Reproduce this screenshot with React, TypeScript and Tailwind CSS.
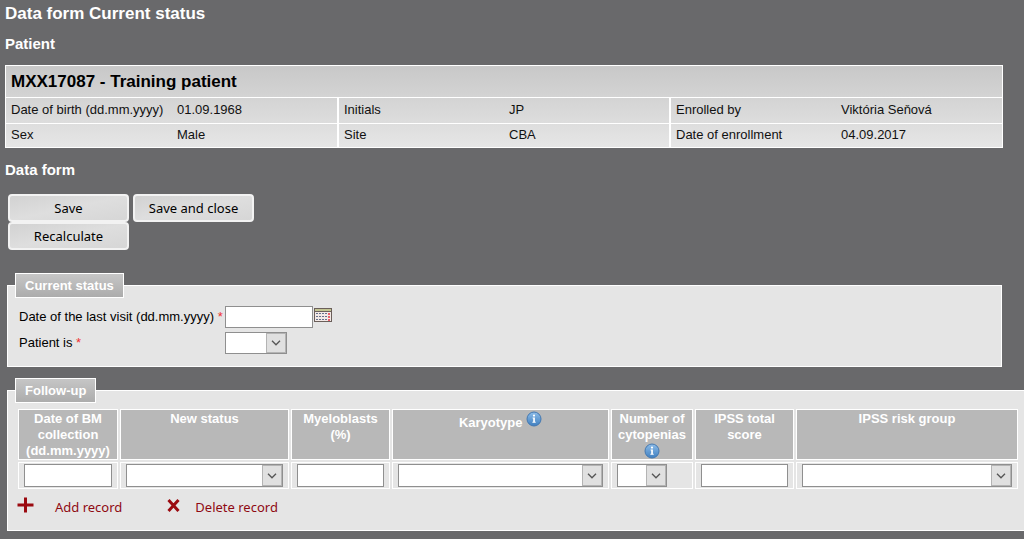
import type { ReactNode } from 'react';

type Field = { label: string; value: string };

const patientRows: Field[][] = [
  [
    { label: 'Date of birth (dd.mm.yyyy)', value: '01.09.1968' },
    { label: 'Initials', value: 'JP' },
    { label: 'Enrolled by', value: 'Viktória Seňová' },
  ],
  [
    { label: 'Sex', value: 'Male' },
    { label: 'Site', value: 'CBA' },
    { label: 'Date of enrollment', value: '04.09.2017' },
  ],
];

function SelectBox({ id, label, className }: { id?: string; label?: string; className: string }) {
  return (
    <div className={`relative ${className}`}>
      <select
        id={id}
        aria-label={label}
        className="block h-full w-full appearance-none rounded-none border border-[#8f8f8f] bg-white px-1 outline-none"
      >
        <option value=""></option>
      </select>
      <span className="pointer-events-none absolute inset-y-px right-px flex w-5 items-center justify-center border border-[#b4b4b4] bg-[#e0e0e0]">
        <svg width="10" height="6" viewBox="0 0 10 6" fill="none" stroke="#555" strokeWidth="1.3">
          <path d="M1 0.8 L5 4.8 L9 0.8" />
        </svg>
      </span>
    </div>
  );
}

function CalendarIcon() {
  return (
    <svg width="18" height="14" viewBox="0 0 18 14" shapeRendering="crispEdges">
      <rect x="0" y="0" width="18" height="14" fill="#6b5f5a" />
      <rect x="1" y="1" width="16" height="2" fill="#c3c592" />
      <rect x="1" y="4" width="16" height="9" fill="#f3e9e6" />
      {[5, 8, 11].map((y) =>
        [2, 5, 8, 11].map((x) => <rect key={`${x}-${y}`} x={x} y={y} width="2" height="1" fill="#66718c" />),
      )}
      {[5, 8, 11].map((y) => (
        <rect key={y} x="14" y={y} width="2" height="2" fill="#e8606a" />
      ))}
    </svg>
  );
}

function InfoIcon({ className }: { className: string }) {
  return (
    <svg width="16" height="16" viewBox="0 0 16 16" className={`inline-block ${className}`} role="img" aria-label="Information">
      <defs>
        <linearGradient id="info" x1="0" y1="0" x2="0" y2="1">
          <stop offset="0" stopColor="#8dbce8" />
          <stop offset="1" stopColor="#3f7fc0" />
        </linearGradient>
      </defs>
      <circle cx="8" cy="8" r="7" fill="url(#info)" stroke="#4478b0" strokeWidth="1" />
      <circle cx="8" cy="4.6" r="1.1" fill="#fff" />
      <path d="M6.6 6.6 H8.9 V10.8 H9.7 V11.7 H6.4 V10.8 H7.2 V7.5 H6.6 Z" fill="#fff" />
    </svg>
  );
}

function FormButton({ children }: { children: ReactNode }) {
  return (
    <button
      type="button"
      className="h-7 w-[121px] rounded border-2 border-[#f2f2f2] bg-linear-to-br from-[#d2d2d2] via-[#dedede] to-[#d6d6d6] font-['Noto_Sans',sans-serif] text-[13px] leading-5 text-black"
    >
      {children}
    </button>
  );
}

function Legend({ children }: { children: ReactNode }) {
  return (
    <legend className="h-[25px] border border-white bg-linear-to-b from-[#c6c6c6] to-[#acacac] px-[9px] text-[13px] leading-[23px] font-bold text-white">
      {children}
    </legend>
  );
}

type Column = { title: ReactNode; name: string; width: string; control: string; kind: 'text' | 'select' };

const columns: Column[] = [
  { title: 'Date of BM collection (dd.mm.yyyy)', name: 'Date of BM collection', width: 'w-[100px]', control: 'w-full', kind: 'text' },
  { title: 'New status', name: 'New status', width: 'w-[169px]', control: 'w-full', kind: 'select' },
  { title: 'Myeloblasts (%)', name: 'Myeloblasts', width: 'w-[99px]', control: 'w-full', kind: 'text' },
  {
    title: (
      <>
        Karyotype <InfoIcon className="align-baseline" />
      </>
    ),
    name: 'Karyotype', width: 'w-[217px]', control: 'w-full', kind: 'select',
  },
  {
    title: (
      <>
        Number of cytopenias <InfoIcon className="align-top" />
      </>
    ),
    name: 'Number of cytopenias', width: 'w-[82px]', control: 'w-[50px]', kind: 'select',
  },
  { title: 'IPSS total score', name: 'IPSS total score', width: 'w-[99px]', control: 'w-full', kind: 'text' },
  { title: 'IPSS risk group', name: 'IPSS risk group', width: 'w-auto', control: 'w-full', kind: 'select' },
];

export default function App() {
  return (
    <main className="min-h-screen overflow-hidden bg-[#69696b] pt-1 pb-2 font-['Liberation_Sans',Arial,sans-serif] text-[13px] leading-4 text-[#111]">
      <h1 className="ml-[5px] text-[17px] leading-5 font-bold text-white">Data form Current status</h1>
      <h2 className="mt-2.5 ml-[5px] text-[15px] leading-5 font-bold text-white">Patient</h2>

      <div className="mt-[11px] mr-[21px] ml-[5px] border border-white bg-linear-to-b from-[#c8c8c8] to-[#e6e6e6]">
        <h3 className="h-8 border-b border-white px-[5px] text-[17px] leading-8 font-bold text-black">
          MXX17087 - Training patient
        </h3>
        <table className="w-full table-fixed border-collapse">
          <tbody>
            {patientRows.map((row, r) => (
              <tr key={r} className={r === 0 ? 'h-[25px] border-b border-white' : 'h-6'}>
                {row.map((f, i) => [
                  <th key={f.label} scope="row" className="px-[5px] text-left font-normal whitespace-nowrap">
                    {f.label}
                  </th>,
                  <td key={f.value} className={i < 2 ? 'border-r-2 border-white px-[5px]' : 'px-[5px]'}>
                    {f.value}
                  </td>,
                ])}
              </tr>
            ))}
          </tbody>
        </table>
      </div>

      <h2 className="mt-3 ml-[5px] text-[15px] leading-5 font-bold text-white">Data form</h2>

      <div className="mt-3.5 ml-2 flex max-w-[260px] flex-wrap gap-x-1">
        <FormButton>Save</FormButton>
        <FormButton>Save and close</FormButton>
        <FormButton>Recalculate</FormButton>
      </div>

      <fieldset className="mt-[23px] mr-[22px] ml-[7px] border border-white bg-[#e5e5e5] px-[7px] pb-3">
        <Legend>Current status</Legend>
        <div className="grid grid-cols-[206px_auto] items-center gap-y-1 pt-2 pl-1 text-black">
          <label htmlFor="visit">
            Date of the last visit (dd.mm.yyyy) <span className="text-[#f03030]">*</span>
          </label>
          <div className="flex">
            <input id="visit" type="text" className="h-[22px] w-[88px] border border-[#8f8f8f] bg-white px-1 outline-none" />
            <button type="button" aria-label="Pick a date" className="mt-0.5 ml-px h-3.5">
              <CalendarIcon />
            </button>
          </div>
          <label htmlFor="patient-is">
            Patient is <span className="text-[#f03030]">*</span>
          </label>
          <SelectBox id="patient-is" className="h-[22px] w-[62px]" />
        </div>
      </fieldset>

      <fieldset className="mt-[11px] ml-[7px] min-w-0 border border-r-0 border-white bg-[#e5e5e5] pr-1 pb-[13px] pl-[7px]">
        <Legend>Follow-up</Legend>
        <div className="pt-1 pl-px">
          <table className="w-full table-fixed border-separate border-spacing-0.5">
            <thead>
              <tr>
                {columns.map((c) => (
                  <th
                    key={c.name}
                    scope="col"
                    className={`${c.width} h-[51px] border border-white bg-[#b8b8b8] px-0.5 pt-px align-top text-[13px] leading-4 font-bold text-white`}
                  >
                    {c.title}
                  </th>
                ))}
              </tr>
            </thead>
            <tbody>
              <tr>
                {columns.map((c) => (
                  <td key={c.name} className="border border-white px-[5px] py-px">
                    {c.kind === 'text' ? (
                      <input
                        type="text"
                        aria-label={c.name}
                        className="block h-[23px] w-full border border-[#8f8f8f] bg-white px-1 outline-none"
                      />
                    ) : (
                      <SelectBox label={c.name} className={`h-[23px] ${c.control}`} />
                    )}
                  </td>
                ))}
              </tr>
            </tbody>
          </table>
          <div className="flex items-center gap-[45px] pt-1.5 pl-px font-['Noto_Sans',sans-serif] text-[13px] leading-5 text-[#8f0a12]">
            <button type="button" className="flex items-center gap-[21px]">
              <svg width="17" height="16" viewBox="0 0 17 16" className="mb-1" fill="none" stroke="#9b0a10" strokeWidth="3">
                <path d="M8.5 0.5 V15.5 M0.5 8 H16.5" />
              </svg>
              Add record
            </button>
            <button type="button" className="flex items-center gap-[15px]">
              <svg width="13" height="13" viewBox="0 0 13 13" className="mb-1" fill="none" stroke="#9b0a10" strokeWidth="3">
                <path d="M1.5 1 L11.5 12 M11.5 1 L1.5 12" />
              </svg>
              Delete record
            </button>
          </div>
        </div>
      </fieldset>
    </main>
  );
}
